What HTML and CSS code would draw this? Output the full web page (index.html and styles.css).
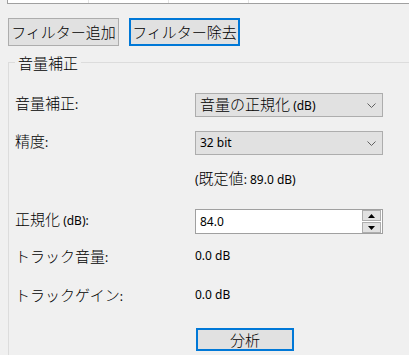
FILE: index.html
```html
<!DOCTYPE html>
<html lang="ja">
<head>
<meta charset="utf-8">
<link rel="stylesheet" href="styles.css">
</head>
<body>
<div class="tabs"><span class="tab tab-1"></span><span class="tab"></span><span class="tab"></span></div>
<div class="actions">
  <button class="btn">フィルター追加</button>
  <button class="btn btn-focus">フィルター除去</button>
</div>
<fieldset class="group">
  <legend class="group-title">音量補正</legend>
  <div class="row row-1">
    <span class="label"><span class="ja">音量補正</span>:</span>
    <div class="combo"><span class="combo-text"><span class="ja">音量の正規化</span> (dB)</span>
      <svg class="chev" width="9" height="5" viewBox="0 0 9 5"><path d="M0.5 0.5 L4.5 4.5 L8.5 0.5" fill="none" stroke="#606060" stroke-width="1"/></svg>
    </div>
  </div>
  <div class="row row-2">
    <span class="label"><span class="ja">精度</span>:</span>
    <div class="combo"><span class="combo-text">32 bit</span>
      <svg class="chev" width="9" height="5" viewBox="0 0 9 5"><path d="M0.5 0.5 L4.5 4.5 L8.5 0.5" fill="none" stroke="#606060" stroke-width="1"/></svg>
    </div>
  </div>
  <div class="row row-3">
    <span class="label"></span>
    <span class="value">(<span class="ja">既定値</span>: 89.0 dB)</span>
  </div>
  <div class="row row-4">
    <span class="label"><span class="ja">正規化</span> (dB):</span>
    <div class="textbox"><span class="textbox-text">84.0</span>
      <div class="spin">
        <span class="spin-btn"><svg width="7" height="4" viewBox="0 0 7 4"><path d="M0 4 L3.5 0 L7 4 Z" fill="#000"/></svg></span>
        <span class="spin-btn"><svg width="7" height="4" viewBox="0 0 7 4"><path d="M0 0 L3.5 4 L7 0 Z" fill="#000"/></svg></span>
      </div>
    </div>
  </div>
  <div class="row row-5">
    <span class="label"><span class="ja">トラック音量</span>:</span>
    <span class="value">0.0 dB</span>
  </div>
  <div class="row row-6">
    <span class="label"><span class="ja">トラックゲイン</span>:</span>
    <span class="value">0.0 dB</span>
  </div>
  <div class="row row-7">
    <span class="label"></span>
    <button class="btn btn-focus btn-analyze">分析</button>
  </div>
</fieldset>
</body>
</html>
```
FILE: styles.css
```css
html, body {
  margin: 0;
  padding: 0;
}
html {
  overflow: hidden;
}
body {
  width: 409px;
  height: 355px;
  overflow: hidden;
  background: #f0f0f0;
  color: #000;
  font-family: "Noto Sans", "Noto Sans CJK JP", sans-serif;
  font-size: 12px;
}
.ja {
  font-family: "Noto Sans CJK JP", sans-serif;
  font-size: 15px;
  font-weight: 300;
}
.tabs {
  display: flex;
  height: 3px;
  margin-left: 7px;
  border-left: 1px solid #a0a0a0;
  border-bottom: 1px solid #a0a0a0;
  background: #fff;
}
.tab {
  width: 79px;
  border-right: 1px solid #e3e3e3;
}
.tab-1 {
  width: 80px;
}
.actions {
  display: flex;
  gap: 10px;
  margin: 14px 0 0 8px;
}
.btn {
  box-sizing: border-box;
  width: 111px;
  height: 28px;
  padding: 0;
  border: 1px solid #adadad;
  background: #e1e1e1;
  color: #000;
  font-family: "Noto Sans CJK JP", sans-serif;
  font-size: 15px;
  font-weight: 300;
  line-height: 20px;
  text-align: center;
}
.btn-focus {
  border: 2px solid #0078d7;
}
.group {
  box-sizing: border-box;
  width: 402px;
  min-width: 0;
  height: 302px;
  margin: 8px 0 0 8px;
  padding: 0 0 0 6px;
  border: 1px solid #dcdcdc;
}
.group-title {
  padding: 0 3px;
  font-family: "Noto Sans CJK JP", sans-serif;
  font-size: 15px;
  font-weight: 300;
  line-height: 17px;
}
.row {
  display: flex;
  align-items: flex-start;
  line-height: 19px;
}
.label {
  flex: 0 0 180px;
  line-height: 19px;
}
.row-1 { margin-top: 22px; }
.row-2 { margin-top: 14px; }
.row-3 { margin-top: 13px; }
.row-4 { margin-top: 20px; }
.row-5 { margin-top: 12px; line-height: 20px; }
.row-5 .label, .row-6 .label { line-height: 20px; }
.row-6 { margin-top: 17px; line-height: 20px; }
.row-7 { margin-top: 21px; }
.combo {
  box-sizing: border-box;
  display: flex;
  align-items: center;
  justify-content: space-between;
  width: 188px;
  height: 24px;
  padding: 0 6px 0 4px;
  border: 1px solid #adadad;
  background: #e1e1e1;
}
.combo-text {
  line-height: 20px;
}
.chev {
  display: block;
}
.textbox {
  box-sizing: border-box;
  display: flex;
  align-items: center;
  justify-content: space-between;
  width: 188px;
  height: 25px;
  padding: 0 1px 0 4px;
  border: 1px solid #a0a0a0;
  background: #fff;
}
.spin {
  display: flex;
  flex-direction: column;
  gap: 1px;
  width: 19px;
}
.spin-btn {
  box-sizing: border-box;
  display: flex;
  align-items: center;
  justify-content: center;
  height: 11px;
  border: 1px solid #adadad;
  background: #e1e1e1;
}
.spin-btn svg {
  display: block;
}
.btn-analyze {
  width: 98px;
  height: 23px;
  margin-left: 1px;
  line-height: 18px;
}
```
